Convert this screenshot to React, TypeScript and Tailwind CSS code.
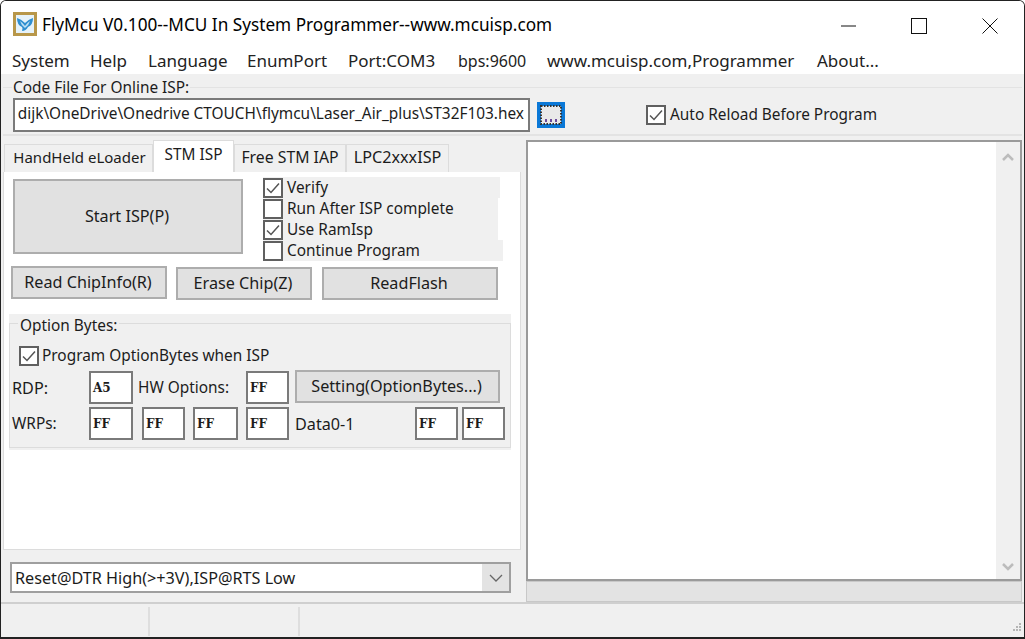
import React from "react";

const Box = ({ checked }: { checked?: boolean }) => (
  <span className="flex h-[20px] w-[20px] shrink-0 items-center justify-center border-2 border-[#606060] bg-white">
    {checked && (
      <svg width="16" height="16" viewBox="0 0 16 16" fill="none">
        <path d="M2 8.5 L6 12.5 L14 3.5" stroke="#555" strokeWidth="1.5" />
      </svg>
    )}
  </span>
);

const Btn = ({ children, className }: { children: React.ReactNode; className: string }) => (
  <div className={`flex items-center justify-center border-2 border-[#adadad] bg-[#e1e1e1] pb-[1px] pr-[2px] text-[16.2px] ${className}`}>{children}</div>
);

const Hex = ({ v, className }: { v: string; className: string }) => (
  <div className={`flex h-[33px] items-center border-2 border-[#7a7a7a] bg-white pl-[2px] font-['DejaVu_Serif',serif] text-[12px] font-bold ${className}`}>{v}</div>
);

const Row = ({ label, checked, className }: { label: string; checked?: boolean; className: string }) => (
  <div className={`flex h-[21px] items-center gap-[4px] bg-[#f0f0f0] ${className}`}>
    <Box checked={checked} />
    <span>{label}</span>
  </div>
);

const Logo = () => (
  <svg width="24" height="24" viewBox="0 0 24 24" className="mb-[4px] shrink-0">
    <rect x="0" y="0" width="24" height="24" fill="#b8974a" />
    <rect x="3" y="3" width="18" height="18" fill="#e6f2f9" />
    <path d="M4 6 Q8 7 12 11 Q16 7 20 6 Q20 13 15 15 Q13 19 9 19 Q10 16 9 15 Q4 13 4 6Z" fill="#2f8fd0" />
    <path d="M7 9 Q10 11 12 14 Q14 11 17 9 Q16 13 12 16 Q8 13 7 9Z" fill="#bfe0f3" />
  </svg>
);

const BrowseIcon = () => (
  <div className="ml-[7px] mt-[4px] flex h-[26px] w-[28px] items-center justify-center bg-[#0a78d7]">
    <svg width="22" height="20" viewBox="0 0 22 20">
      <rect x="1" y="1" width="20" height="18" fill="#e9e9e9" stroke="#333" strokeWidth="2" strokeDasharray="1.5 1.5" />
      <path d="M6 17v-3M11 17v-3M16 17v-3" stroke="#6b4a9a" strokeWidth="2" />
    </svg>
  </div>
);

export default function App() {
  return (
    <div className="flex h-[639px] w-[1025px] flex-col overflow-hidden rounded-t-[6px] border-x border-t border-b-2 border-x-[#222] border-t-[#222] border-b-[#222] bg-[#f0f0f0] font-['Noto_Sans','Open_Sans',sans-serif] text-[15.4px] leading-[20px] text-[#1c1c1c]">
      {/* title bar */}
      <div className="flex h-[49px] shrink-0 items-center bg-white pl-[12px]">
        <Logo />
        <span className="ml-[5px] pb-[2px] text-[17.2px] text-black">FlyMcu V0.100--MCU In System Programmer--www.mcuisp.com</span>
        <div className="ml-auto flex items-center">
          <svg width="16" height="16" viewBox="0 0 16 16" className="mr-[54px]"><path d="M0 8h15" stroke="#111" strokeWidth="1" /></svg>
          <svg width="16" height="16" viewBox="0 0 16 16" className="mr-[55px]"><rect x="0.5" y="0.5" width="15" height="15" fill="none" stroke="#111" /></svg>
          <svg width="16" height="16" viewBox="0 0 16 16" className="mr-[26px]"><path d="M0.5 0.5L15.5 15.5M15.5 0.5L0.5 15.5" stroke="#111" /></svg>
        </div>
      </div>
      {/* menu */}
      <div className="flex h-[24px] shrink-0 items-center bg-white pb-[2px] pl-[11px] text-[17px] whitespace-nowrap text-[#222]">
        <span className="w-[78px]">System</span>
        <span className="w-[58px]">Help</span>
        <span className="w-[99px]">Language</span>
        <span className="w-[101px]">EnumPort</span>
        <span className="w-[110px]">Port:COM3</span>
        <span className="w-[89px] text-[16px]">bps:9600</span>
        <span className="w-[270px]">www.mcuisp.com,Programmer</span>
        <span>About...</span>
      </div>
      {/* code file group */}
      <div className="h-[63px] shrink-0 px-[2px] pt-[13px]">
        <div className="relative h-[49px] border-t border-b-2 border-[#e3e3e3]">
          <span className="absolute left-[9px] top-[-8px] bg-[#f0f0f0] px-[1px] leading-[16px]">Code File For Online ISP:</span>
          <div className="flex pl-[10px] pt-[10px]">
            <div className="flex h-[34px] w-[517px] items-center justify-end overflow-hidden border-2 border-[#7a7a7a] bg-white pb-[3px] pr-[4px] whitespace-nowrap">dijk\OneDrive\Onedrive CTOUCH\flymcu\Laser_Air_plus\ST32F103.hex</div>
            <BrowseIcon />
            <div className="ml-[81px] mt-[7px] flex items-center gap-[4px] self-start">
              <Box checked />
              <span>Auto Reload Before Program</span>
            </div>
          </div>
        </div>
      </div>
      {/* main */}
      <div className="flex h-[465px] shrink-0">
        <div className="flex w-[525px] shrink-0 flex-col pl-[2px] pt-[3px]">
          {/* tabs */}
          <div className="flex h-[32px] items-end pl-[1px]">
            <div className="flex h-[28px] w-[149px] items-center justify-center border border-b-0 border-[#dcdcdc] pb-[3px] pl-[2px] text-[15px]">HandHeld eLoader</div>
            <div className="flex h-[32px] w-[81px] items-center justify-center border border-b-0 border-[#dcdcdc] bg-white pb-[4px]">STM ISP</div>
            <div className="flex h-[28px] w-[112px] items-center justify-center border border-b-0 border-[#dcdcdc] pb-[3px] text-[15.8px]">Free STM IAP</div>
            <div className="flex h-[28px] w-[103px] items-center justify-center border border-b-0 border-[#dcdcdc] pb-[3px] text-[16.2px]">LPC2xxxISP</div>
          </div>
          {/* tab panel */}
          <div className="h-[378px] w-[518px] border border-t-0 border-[#dcdcdc] bg-white pt-[5px]">
            <div className="flex">
              <Btn className="ml-[9px] mt-[2px] h-[75px] w-[230px]">Start ISP(P)</Btn>
              <div className="ml-[20px] flex flex-col">
                <Row label="Verify" checked className="w-[237px]" />
                <Row label="Run After ISP complete" className="w-[235px]" />
                <Row label="Use RamIsp" checked className="w-[235px]" />
                <Row label="Continue Program" className="w-[240px]" />
              </div>
            </div>
            <div className="mt-[5px] flex items-start">
              <Btn className="ml-[7px] h-[33px] w-[156px]">Read ChipInfo(R)</Btn>
              <Btn className="ml-[9px] mt-[1px] h-[33px] w-[136px]">Erase Chip(Z)</Btn>
              <Btn className="ml-[10px] mt-[1px] h-[33px] w-[176px]">ReadFlash</Btn>
            </div>
            <div className="ml-[5px] mt-[14px] h-[136px] w-[502px] bg-[#f0f0f0] pt-[9px]">
              <div className="relative h-[125px] border border-[#dcdcdc]">
                <span className="absolute left-[8px] top-[-7px] bg-[#f0f0f0] px-[2px] leading-[18px]">Option Bytes:</span>
                <div className="ml-[9px] mt-[22px] flex h-[20px] items-center gap-[3px]">
                  <Box checked />
                  <span>Program OptionBytes when ISP</span>
                </div>
                <div className="mt-[5px] flex items-center">
                  <span className="w-[79px] pl-[2px] text-[16.2px]">RDP:</span>
                  <Hex v="A5" className="w-[44px]" />
                  <span className="ml-[5px] w-[108px]">HW Options:</span>
                  <Hex v="FF" className="w-[43px]" />
                  <Btn className="-mt-[1px] ml-[6px] h-[33px] w-[205px] self-start">Setting(OptionBytes...)</Btn>
                </div>
                <div className="mt-[3px] flex items-center">
                  <span className="w-[79px] pl-[2px]">WRPs:</span>
                  <Hex v="FF" className="w-[44px]" />
                  <Hex v="FF" className="ml-[9px] w-[43px]" />
                  <Hex v="FF" className="ml-[8px] w-[45px]" />
                  <Hex v="FF" className="ml-[8px] w-[43px]" />
                  <span className="ml-[6px] w-[120px] text-[16.2px]">Data0-1</span>
                  <Hex v="FF" className="w-[43px]" />
                  <Hex v="FF" className="ml-[4px] w-[43px]" />
                </div>
              </div>
            </div>
          </div>
          {/* combo */}
          <div className="ml-[7px] mt-[12px] flex h-[31px] w-[501px] items-center border-2 border-[#9f9f9f] bg-white pl-[3px] text-[16.2px]">
            <span>Reset@DTR High(&gt;+3V),ISP@RTS Low</span>
            <div className="ml-auto flex h-full w-[27px] items-center justify-center bg-[#e3e3e3]">
              <svg width="14" height="8" viewBox="0 0 14 8" fill="none"><path d="M1 1l6 6 6-6" stroke="#666" strokeWidth="1.3" /></svg>
            </div>
          </div>
        </div>
        {/* right */}
        <div className="flex flex-1 flex-col pr-[2px] pt-[3px]">
          <div className="flex h-[441px] border-2 border-[#9a9a9a] bg-white">
            <div className="flex-1" />
            <div className="flex w-[24px] flex-col items-center justify-between bg-[#f0f0f0] pb-[8px] pt-[11px]">
              <svg width="14" height="9" viewBox="0 0 14 9" fill="none"><path d="M2 7l5-5 5 5" stroke="#bcbcbc" strokeWidth="2.5" /></svg>
              <svg width="14" height="9" viewBox="0 0 14 9" fill="none"><path d="M2 2l5 5 5-5" stroke="#bcbcbc" strokeWidth="2.5" /></svg>
            </div>
          </div>
          <div className="h-[21px] border border-[#c8c8c8] bg-[#e3e3e3]" />
        </div>
      </div>
      {/* status bar */}
      <div className="flex min-h-0 flex-1 border-t-2 border-[#cfcfcf] pt-[3px]">
        <div className="h-[29px] w-[149px] border-r-2 border-[#dedede]" />
        <div className="h-[29px] w-[150px] border-r-2 border-[#dedede]" />
        <div className="ml-auto mr-[2px] mt-[16px]">
          <svg width="12" height="12" viewBox="0 0 12 12" fill="#b5b5b5">
            <rect x="9" y="0" width="2" height="2" /><rect x="6" y="3" width="2" height="2" /><rect x="9" y="3" width="2" height="2" />
            <rect x="3" y="6" width="2" height="2" /><rect x="6" y="6" width="2" height="2" /><rect x="9" y="6" width="2" height="2" />
          </svg>
        </div>
      </div>
    </div>
  );
}
